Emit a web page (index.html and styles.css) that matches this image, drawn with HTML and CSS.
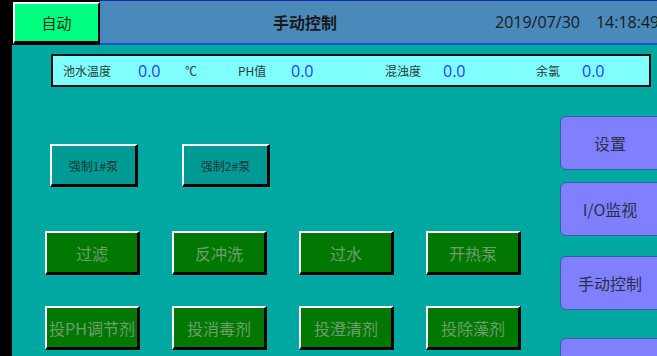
FILE: index.html
```html
<!DOCTYPE html>
<html lang="zh-CN">
<head>
  <meta charset="UTF-8">
  <title>手动控制</title>
  <link rel="stylesheet" href="styles.css">
</head>
<body>
  <div class="screen">

    <!-- top bar: mode button + title -->
    <div class="topbar">
      <div class="auto-btn">自动</div>
      <div class="title-bar">
        <span class="title">手动控制</span>
        <span class="date">2019/07/30</span>
        <span class="time">14:18:49</span>
      </div>
    </div>

    <div class="content">
      <!-- sensor readings -->
      <div class="info-bar">
        <span class="label">池水温度</span>
        <span class="value">0.0</span>
        <span class="label">℃</span>
        <span class="label">PH值</span>
        <span class="value">0.0</span>
        <span class="label">混浊度</span>
        <span class="value">0.0</span>
        <span class="label">余氯</span>
        <span class="value">0.0</span>
      </div>

      <div class="main">
        <div class="controls">
          <div class="force-row">
            <div class="bevel force-btn">强制1#泵</div>
            <div class="bevel force-btn">强制2#泵</div>
          </div>
          <div class="op-grid">
            <div class="bevel op-btn">过滤</div>
            <div class="bevel op-btn">反冲洗</div>
            <div class="bevel op-btn">过水</div>
            <div class="bevel op-btn">开热泵</div>
            <div class="bevel op-btn">投PH调节剂</div>
            <div class="bevel op-btn">投消毒剂</div>
            <div class="bevel op-btn">投澄清剂</div>
            <div class="bevel op-btn">投除藻剂</div>
          </div>
        </div>

        <!-- page navigation -->
        <div class="nav">
          <div class="nav-btn">设置</div>
          <div class="nav-btn nav-io">I/O监视</div>
          <div class="nav-btn nav-manual">手动控制</div>
          <div class="nav-btn nav-last">主页面</div>
        </div>
      </div>
    </div>

  </div>
</body>
</html>
```

FILE: styles.css
```css
body {
  margin: 0;
  background-color: #000;
  font-family: 'Noto Sans CJK SC', 'Noto Sans', sans-serif;
}
.screen {
  width: 657px;
  height: 356px;
  overflow: hidden;
  display: flex;
  flex-direction: column;
  background-color: #000;
}
.topbar {
  display: flex;
  height: 45px;
  flex-shrink: 0;
}
.auto-btn {
  margin: 2px 0 0 13px;
  width: 83px;
  height: 37px;
  background-color: #00FF80;
  border-style: solid;
  border-width: 2px 2px 3px 2px;
  border-color: #fff #000 #000 #fff;
  display: flex;
  align-items: center;
  justify-content: center;
  font-size: 15px;
  color: #1a2a1a;
}
.title-bar {
  flex: 1;
  min-width: 0;
  background-color: #4A8ABA;
  border-top: 1px solid #1a2ab0;
  border-bottom: 2px solid #2050d0;
  display: flex;
  align-items: center;
  white-space: nowrap;
  overflow: hidden;
  color: #1a1a1a;
}
.title {
  margin-left: 173px;
  font-size: 16px;
  font-weight: bold;
}
.date {
  margin-left: 158px;
  font-family: 'Open Sans', 'Noto Sans', sans-serif;
  font-size: 16px;
}
.time {
  margin-left: 16px;
  font-family: 'Open Sans', 'Noto Sans', sans-serif;
  font-size: 16px;
}
.content {
  flex: 1;
  margin-left: 12px;
  background-color: #00A8A2;
  display: flex;
  flex-direction: column;
}
.info-bar {
  margin: 9px 0 0 39px;
  width: 586px;
  height: 29px;
  border: 2px solid #111;
  background-color: #80FFFF;
  display: grid;
  grid-template-columns: 75px 47px 53px 53px 94px 58px 93px 46px auto;
  align-items: center;
  padding-left: 10px;
  box-sizing: content-box;
}
.info-bar .label {
  font-size: 12px;
  color: #2a3a3a;
}
.info-bar .value {
  font-family: 'Open Sans', 'Noto Sans', sans-serif;
  font-size: 16px;
  color: #2040FF;
}
.main {
  display: flex;
  flex: 1;
}
.controls {
  flex: 1;
}
.bevel {
  box-sizing: border-box;
  border-style: solid;
  border-width: 2px 3px 3px 2px;
  border-color: #fff #000 #000 #fff;
  display: flex;
  align-items: center;
  justify-content: center;
  white-space: nowrap;
}
.force-row {
  display: flex;
  gap: 44px;
  margin: 57px 0 0 38px;
}
.force-btn {
  width: 88px;
  height: 43px;
  background-color: #009A94;
  font-size: 12px;
  color: #123838;
}
.op-grid {
  display: grid;
  grid-template-columns: repeat(4, 95px);
  grid-auto-rows: 44px;
  column-gap: 32px;
  row-gap: 31px;
  margin: 44px 0 0 33px;
}
.op-btn {
  background-color: #007800;
  font-size: 16px;
  color: #6E9E6E;
}
.nav {
  width: 110px;
  flex-shrink: 0;
  margin-right: -13px;
  padding-top: 29px;
}
.nav-btn {
  height: 54px;
  box-sizing: border-box;
  background-color: #8080FF;
  border: 1px solid #3a5aa8;
  border-radius: 6px;
  display: flex;
  align-items: center;
  justify-content: center;
  padding-right: 10px;
  font-size: 16px;
  color: #2e2e4a;
}
.nav-io {
  margin-top: 12px;
}
.nav-manual {
  margin-top: 20px;
}
.nav-last {
  margin-top: 28px;
}
```
